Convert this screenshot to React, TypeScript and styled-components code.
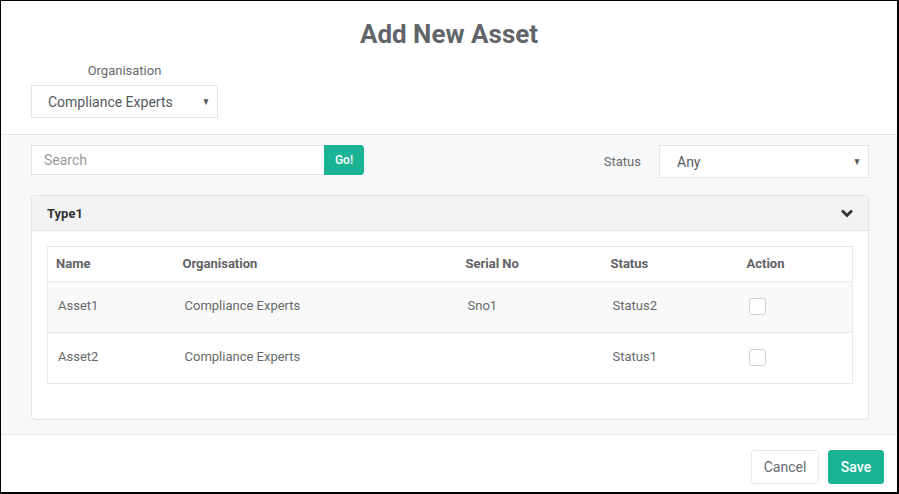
import React from "react";
import styled, { createGlobalStyle } from "styled-components";

const Global = createGlobalStyle`
  html, body { margin: 0; padding: 0; background: #fff; }
  body { font-family: Roboto, "Noto Sans", "Liberation Sans", sans-serif; }
  * { box-sizing: border-box; }
`;

const Modal = styled.div`
  width: 899px;
  height: 494px;
  border-style: solid;
  border-color: #000;
  border-width: 1px 2px 2px 1px;
  display: flex;
  flex-direction: column;
  background: #fff;
  color: #676a6c;
`;

const Header = styled.div`
  height: 134px;
  border-bottom: 1px solid #e5e6e7;
  padding: 17px 30px 0;
  display: flex;
  flex-direction: column;
`;

const Title = styled.h1`
  margin: 0;
  text-align: center;
  font-size: 26px;
  font-weight: 700;
  line-height: 32px;
  color: #62666a;
`;

const OrgField = styled.div`
  margin-top: 13px;
  width: 187px;
  display: flex;
  flex-direction: column;
  align-items: center;
`;

const Label = styled.label`
  font-size: 13px;
  color: #676a6c;
  line-height: 16px;
`;

const Select = styled.div<{ $w: number; $pad: number }>`
  width: ${(p) => p.$w}px;
  height: 33px;
  border: 1px solid #e5e6e7;
  background: #fff;
  display: flex;
  align-items: center;
  justify-content: space-between;
  padding: 0 6px 0 ${(p) => p.$pad}px;
  font-size: 14px;
  color: #555a5e;
`;

const Caret = styled.span`
  font-size: 10px;
  color: #555;
  transform: scaleX(0.8);
`;

const Body = styled.div`
  flex: 1;
  background: #f7f8fa;
  border-bottom: 1px solid #e5e6e7;
  padding: 10px 28px 0 30px;
  display: flex;
  flex-direction: column;
`;

const Toolbar = styled.div`
  display: flex;
  align-items: flex-start;
  justify-content: space-between;
`;

const SearchGroup = styled.div`
  display: flex;
  height: 30px;
`;

const SearchInput = styled.div`
  width: 293px;
  height: 30px;
  border: 1px solid #e5e6e7;
  border-right: none;
  background: #fff;
  display: flex;
  align-items: center;
  padding-left: 12px;
  font-size: 14px;
  color: #9a9a9a;
`;

const Button = styled.button<{ $primary?: boolean }>`
  font-family: inherit;
  border: 1px solid ${(p) => (p.$primary ? "#1ab394" : "#e7eaec")};
  background: ${(p) => (p.$primary ? "#1ab394" : "#fff")};
  color: ${(p) => (p.$primary ? "#fff" : "#676a6c")};
  border-radius: 3px;
  cursor: pointer;
  display: flex;
  align-items: center;
  justify-content: center;
`;

const GoButton = styled(Button)`
  width: 40px;
  height: 30px;
  font-size: 12px;
  font-weight: 500;
  border-radius: 0 3px 3px 0;
`;

const StatusGroup = styled.div`
  display: flex;
  align-items: center;
  gap: 18px;
`;

const Panel = styled.div`
  margin-top: 17px;
  border: 1px solid #e2e3e4;
  border-radius: 4px;
  background: #fff;
  height: 225px;
  overflow: hidden;
`;

const PanelHeader = styled.div`
  height: 35px;
  background: #f3f3f4;
  border-bottom: 1px solid #e2e3e4;
  display: flex;
  align-items: center;
  justify-content: space-between;
  padding: 0 14px 0 15px;
  font-size: 13px;
  font-weight: 700;
  color: #333;
`;

const PanelBody = styled.div`
  padding: 15px 15px 0 15px;
`;

const Table = styled.table`
  width: 100%;
  border-collapse: collapse;
  border: 1px solid #e7eaec;
  font-size: 13px;
`;

const Th = styled.th<{ $w?: number }>`
  text-align: left;
  font-weight: 700;
  color: #5f6266;
  height: 35px;
  padding: 0 8px 2px;
  border-bottom: 1px solid #e7eaec;
  width: ${(p) => (p.$w ? `${p.$w}px` : "auto")};
`;

const Tr = styled.tr<{ $alt?: boolean }>`
  background: ${(p) => (p.$alt ? "#f9f9f9" : "#fff")};
  border-bottom: 1px solid #e7eaec;
`;

const Td = styled.td`
  height: 51px;
  padding: 0 10px 4px;
  color: #676a6c;
  vertical-align: middle;
`;

const Check = styled.span`
  display: block;
  width: 17px;
  height: 17px;
  border: 1px solid #cfd1d3;
  border-radius: 3px;
  background: #fff;
  margin-top: 2px;
`;

const Footer = styled.div`
  height: 57px;
  display: flex;
  justify-content: flex-end;
  align-items: flex-start;
  gap: 9px;
  padding: 15px 13px 0 0;
`;

const FooterButton = styled(Button)<{ $w: number }>`
  width: ${(p) => p.$w}px;
  height: 34px;
  font-size: 14px;
  font-weight: ${(p) => (p.$primary ? 500 : 400)};
`;

const rows = [
  { name: "Asset1", org: "Compliance Experts", sn: "Sno1", status: "Status2" },
  { name: "Asset2", org: "Compliance Experts", sn: "", status: "Status1" },
];

export default function App() {
  return (
    <>
      <Global />
      <Modal>
        <Header>
          <Title>Add New Asset</Title>
          <OrgField>
            <Label>Organisation</Label>
            <Select $w={187} $pad={16} style={{ marginTop: 6 }}>
              <span>Compliance Experts</span>
              <Caret>▼</Caret>
            </Select>
          </OrgField>
        </Header>
        <Body>
          <Toolbar>
            <SearchGroup>
              <SearchInput>Search</SearchInput>
              <GoButton $primary>Go!</GoButton>
            </SearchGroup>
            <StatusGroup>
              <Label>Status</Label>
              <Select $w={210} $pad={17}>
                <span>Any</span>
                <Caret>▼</Caret>
              </Select>
            </StatusGroup>
          </Toolbar>
          <Panel>
            <PanelHeader>
              <span>Type1</span>
              <svg width="14" height="10" viewBox="0 0 14 10">
                <path d="M2 2.5 L7 7.5 L12 2.5" fill="none" stroke="#333" strokeWidth="2.8" />
              </svg>
            </PanelHeader>
            <PanelBody>
              <Table>
                <thead>
                  <tr>
                    <Th $w={127}>Name</Th>
                    <Th $w={283}>Organisation</Th>
                    <Th $w={145}>Serial No</Th>
                    <Th $w={136}>Status</Th>
                    <Th>Action</Th>
                  </tr>
                </thead>
                <tbody>
                  {rows.map((r, i) => (
                    <Tr key={r.name} $alt={i === 0}>
                      <Td>{r.name}</Td>
                      <Td>{r.org}</Td>
                      <Td>{r.sn}</Td>
                      <Td>{r.status}</Td>
                      <Td>
                        <Check />
                      </Td>
                    </Tr>
                  ))}
                </tbody>
              </Table>
            </PanelBody>
          </Panel>
        </Body>
        <Footer>
          <FooterButton $w={68}>Cancel</FooterButton>
          <FooterButton $w={56} $primary>
            Save
          </FooterButton>
        </Footer>
      </Modal>
    </>
  );
}
